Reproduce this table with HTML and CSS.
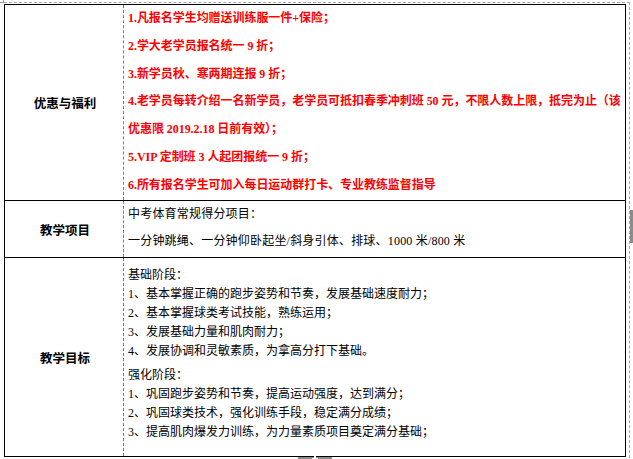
FILE: index.html
```html
<!DOCTYPE html>
<html lang="zh-CN">
<head>
<meta charset="utf-8">
<title>优惠与福利</title>
<link rel="stylesheet" href="styles.css">
</head>
<body>
<div class="page">
  <span class="corner-mark"></span>
  <div class="frame">
    <div class="sheet">
      <div class="row row-offer">
        <div class="label">优惠与福利</div>
        <div class="cell red">
          <div class="line">1.凡报名学生均赠送训练服一件+保险；</div>
          <div class="line">2.学大老学员报名统一 9 折；</div>
          <div class="line">3.新学员秋、寒两期连报 9 折；</div>
          <div class="line">4.老学员每转介绍一名新学员，老学员可抵扣春季冲刺班 50 元，不限人数上限，抵完为止（该</div>
          <div class="line">优惠限 2019.2.18 日前有效）；</div>
          <div class="line">5.VIP 定制班 3 人起团报统一 9 折；</div>
          <div class="line">6.所有报名学生可加入每日运动群打卡、专业教练监督指导</div>
        </div>
      </div>
      <div class="row row-project">
        <div class="label">教学项目</div>
        <div class="cell plain">
          <div class="line">中考体育常规得分项目：</div>
          <div class="line">一分钟跳绳、一分钟仰卧起坐/斜身引体、排球、1000 米/800 米</div>
        </div>
      </div>
      <div class="row row-goal">
        <div class="label">教学目标</div>
        <div class="cell goals">
          <div class="stage">
            <div class="gline">基础阶段：</div>
            <div class="gline">1、基本掌握正确的跑步姿势和节奏，发展基础速度耐力；</div>
            <div class="gline">2、基本掌握球类考试技能，熟练运用；</div>
            <div class="gline">3、发展基础力量和肌肉耐力；</div>
            <div class="gline">4、发展协调和灵敏素质，为拿高分打下基础。</div>
          </div>
          <div class="stage">
            <div class="gline">强化阶段：</div>
            <div class="gline">1、巩固跑步姿势和节奏，提高运动强度，达到满分；</div>
            <div class="gline">2、巩固球类技术，强化训练手段，稳定满分成绩；</div>
            <div class="gline">3、提高肌肉爆发力训练，为力量素质项目奠定满分基础；</div>
          </div>
        </div>
      </div>
    </div>
  </div>
  <span class="handle-right"></span>
  <span class="handle-bottom"></span>
</div>
</body>
</html>
```

FILE: styles.css
```css
html, body {
  margin: 0;
  padding: 0;
  background: #ffffff;
}

.page {
  position: relative;
  width: 633px;
  height: 459px;
  overflow: hidden;
  font-family: "Liberation Serif", "Noto Sans CJK SC", serif;
  color: #000;
}

.corner-mark {
  position: absolute;
  left: 0;
  top: 0;
  width: 3px;
  height: 2px;
  border-right: 1px solid #9a9a9a;
  border-bottom: 1px solid #9a9a9a;
}

.frame {
  margin: 2px 0 0 4px;
  width: 625px;
  height: 460px;
  border-top: 1px dashed #a8a8a8;
  border-right: 1px dashed #a8a8a8;
}

.sheet {
  margin-top: 1px;
  width: 620px;
  border: 1px solid #000;
  display: flex;
  flex-direction: column;
}

.row {
  display: grid;
  grid-template-columns: 119px 1fr;
}

.row + .row {
  border-top: 1px solid #000;
}

.row-offer { height: 195px; }
.row-project { height: 56px; }
.row-goal { height: 198px; }

.label {
  border-right: 1px dashed #7a7a7a;
  display: flex;
  align-items: center;
  justify-content: center;
  font-family: "Noto Sans CJK SC", sans-serif;
  font-weight: bold;
  font-size: 12.5px;
  padding-left: 2px;
}

.cell {
  padding-left: 4px;
  white-space: nowrap;
}

.red {
  color: #ff0000;
  font-weight: bold;
  font-size: 12px;
  line-height: 27.75px;
  letter-spacing: -0.05px;
}

.plain {
  font-size: 12px;
  line-height: 27px;
  letter-spacing: 0.2px;
}

.goals {
  font-size: 12px;
  line-height: 19px;
  padding-top: 8px;
  display: flex;
  flex-direction: column;
  gap: 5px;
}

.handle-right {
  position: absolute;
  left: 630px;
  top: 210px;
  width: 3px;
  height: 33px;
  background: #8c8c8c;
}

.handle-bottom {
  position: absolute;
  left: 298px;
  top: 457px;
  width: 34px;
  height: 8px;
  background: #8c8c8c;
}

.handle-bottom::before,
.handle-bottom::after {
  content: "";
  position: absolute;
  background: #ffffff;
}

.handle-bottom::before {
  left: 14px;
  top: 1px;
  width: 6px;
  height: 2px;
}

.handle-bottom::after {
  left: 16px;
  top: -1px;
  width: 2px;
  height: 6px;
}
```
